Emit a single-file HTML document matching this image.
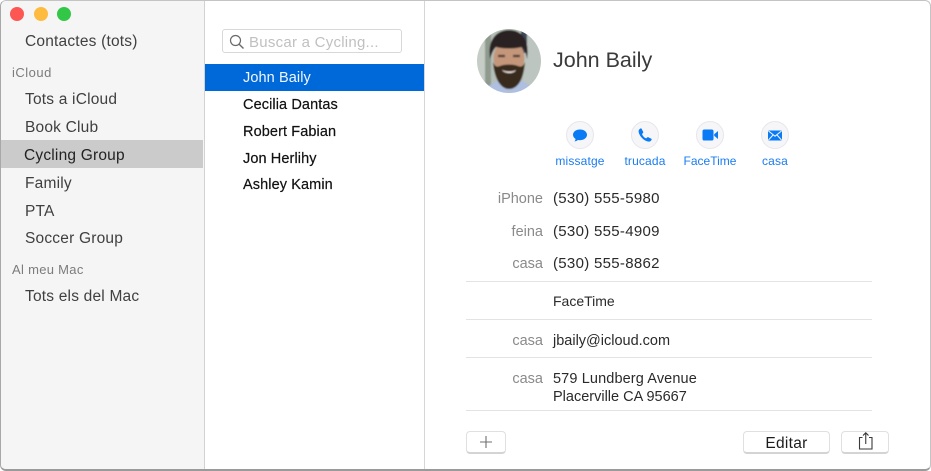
<!DOCTYPE html>
<html>
<head>
<meta charset="utf-8">
<style>
html,body{margin:0;padding:0;background:#fff}
body{width:931px;height:471px;overflow:hidden;position:relative;font-family:"Liberation Sans",sans-serif;-webkit-font-smoothing:antialiased}
.win{position:absolute;left:0;top:0;width:931px;height:471px;box-sizing:border-box;border:1px solid #c4c4c4;border-bottom:2px solid #9a9a9a;border-left-color:#a8a8a8;border-radius:6px;background:#fff;overflow:hidden}
.side{position:absolute;left:1px;top:1px;width:203px;height:468px;background:#f5f5f5;border-right:1px solid #d2d2d2;border-radius:5px 0 0 5px}
.list{position:absolute;left:205px;top:1px;width:219px;height:468px;background:#fff;border-right:1px solid #d6d6d6}
.t{position:absolute;white-space:nowrap;line-height:18px}
.s{font-size:15.5px;color:#404040;letter-spacing:.2px}
.h{font-size:13px;color:#7c7c7c;letter-spacing:.3px}
.n{font-size:14.5px;color:#111;-webkit-text-stroke:.2px #111;letter-spacing:.1px}
.lb{font-size:14.5px;color:#8a8a8a;text-align:right;width:80px;left:463px}
.v{font-size:14.5px;color:#2a2a2a;left:553px}
.p{font-size:15px;letter-spacing:.3px}
.a{font-size:12px;color:#1a7cf0;text-align:center;width:80px;letter-spacing:.15px}
.line{position:absolute;left:466px;width:406px;height:1px;background:#e3e3e3}
.dot{position:absolute;top:7px;width:14px;height:14px;border-radius:50%}
.c{position:absolute;top:121px;width:28px;height:28px;box-sizing:border-box;border-radius:50%;background:#f6f6f9;border:1px solid #e6e6ec}
.btn{position:absolute;top:431px;height:23px;box-sizing:border-box;background:#fff;border:1px solid #e0e0e0;border-bottom:2px solid #d4d4d4;border-radius:4px}
svg{position:absolute;overflow:visible}
</style>
</head>
<body>
<div class="win"></div>
<div class="side"></div>
<div class="list"></div>
<div class="dot" style="left:10px;background:#fc5753"></div>
<div class="dot" style="left:34px;background:#fdbc40"></div>
<div class="dot" style="left:57px;background:#33c748"></div>

<div class="t s" style="left:25px;top:33px">Contactes (tots)</div>
<div class="t h" style="left:12px;top:64px;letter-spacing:.5px">iCloud</div>
<div class="t s" style="left:25px;top:91px">Tots a iCloud</div>
<div class="t s" style="left:25px;top:119px">Book Club</div>
<div style="position:absolute;left:1px;top:140px;width:202px;height:28px;background:#cbcbcb"></div>
<div class="t s" style="left:24px;top:147px;color:#222">Cycling Group</div>
<div class="t s" style="left:25px;top:175px">Family</div>
<div class="t s" style="left:25px;top:203px">PTA</div>
<div class="t s" style="left:25px;top:230px">Soccer Group</div>
<div class="t h" style="left:12px;top:261px">Al meu Mac</div>
<div class="t s" style="left:25px;top:288px">Tots els del Mac</div>

<div style="position:absolute;left:222px;top:29px;width:180px;height:24px;box-sizing:border-box;border:1px solid #d8d8d8;border-radius:3px;background:#fff"></div>
<svg style="left:229px;top:34px" width="16" height="16" viewBox="0 0 16 16" fill="none" stroke="#6a6a6a" stroke-width="1.2"><circle cx="6.5" cy="6.5" r="5"/><path d="M10.2 10.2L14.5 14.5" stroke-width="1.4"/></svg>
<div class="t" style="left:249px;top:34px;font-size:15px;color:#c0c0c0;letter-spacing:.25px">Buscar a Cycling...</div>

<div style="position:absolute;left:205px;top:64px;width:219px;height:27px;background:#0069d9"></div>
<div class="t" style="left:243px;top:69px;font-size:14.5px;color:#f2f7ff;letter-spacing:.1px">John Baily</div>
<div class="t n" style="left:243px;top:96px">Cecilia Dantas</div>
<div class="t n" style="left:243px;top:123px">Robert Fabian</div>
<div class="t n" style="left:243px;top:150px">Jon Herlihy</div>
<div class="t n" style="left:243px;top:176px">Ashley Kamin</div>

<svg style="left:477px;top:29px" width="64" height="64" viewBox="0 0 64 64">
<defs>
<clipPath id="cp"><circle cx="32" cy="32" r="32"/></clipPath>
<filter id="bl" x="-10%" y="-10%" width="120%" height="120%"><feGaussianBlur stdDeviation="0.9"/></filter>
</defs>
<g clip-path="url(#cp)">
<g filter="url(#bl)">
<rect x="-2" y="-2" width="68" height="68" fill="#b5bfb8"/>
<rect x="-2" y="-2" width="10" height="68" fill="#c6ccc6"/>
<rect x="8" y="-2" width="6" height="68" fill="#8f9a8e"/>
<rect x="46" y="-2" width="20" height="68" fill="#bcc5bf"/>
<rect x="44" y="0" width="6" height="24" fill="#3e4756"/>
<path d="M6 66C9 56 18 53 24 51H42C48 53 56 56 58 66Z" fill="#aebfe0"/>
<ellipse cx="32" cy="29" rx="15.5" ry="18" fill="#c4967a"/>
<path d="M13 30C10 12 19 1 32 1C45 1 53 11 50 30C49 24 48 21 45 18C38 20 26 20 19 18C16 21 15 24 13 30Z" fill="#2a2421"/>
<path d="M16 33C17 48 23 60 32 60C42 60 47 48 48 33C46 38 44 38 41 37C37 35 27 35 23 37C20 38 18 38 16 33Z" fill="#38291f"/>
<path d="M21 27H28M36 27H43" stroke="#4a372e" stroke-width="2.2" fill="none"/>
<path d="M25 41C29 43 36 43 39 41C37 45 28 45 25 41Z" fill="#efe5de"/>
</g>
</g>
</svg>
<div class="t" style="left:553px;top:48px;font-size:21.5px;line-height:24px;color:#3a3a3a">John Baily</div>

<div class="c" style="left:566px"></div>
<div class="c" style="left:631px"></div>
<div class="c" style="left:696px"></div>
<div class="c" style="left:761px"></div>
<svg style="left:566px;top:121px" width="28" height="28" viewBox="0 0 28 28"><path d="M14 8.5C9.9 8.5 7 10.9 7 13.8C7 15.5 8 17 9.6 18C9.5 18.9 9 19.8 8.4 20.4C9.8 20.3 11 19.8 11.9 19C12.6 19.1 13.3 19.2 14 19.2C18.1 19.2 21 16.7 21 13.8C21 10.9 18.1 8.5 14 8.5Z" fill="#0a7bf5"/></svg>
<svg style="left:631px;top:121px" width="28" height="28" viewBox="0 0 28 28"><path d="M10.6 7.7L12.2 10.9C12.4 11.3 12.3 11.7 12 12L11 13C11.6 15 13.2 16.7 15.2 17.4L16.2 16.4C16.5 16.1 16.9 16 17.3 16.2L20.3 17.8C20.7 18 20.8 18.4 20.6 18.8C20 20.1 18.9 20.8 17.6 20.6C13 20 8.3 15.2 7.6 10.7C7.4 9.4 8.1 8.2 9.4 7.5C9.9 7.3 10.4 7.3 10.6 7.7Z" fill="#0a7bf5"/></svg>
<svg style="left:696px;top:121px" width="28" height="28" viewBox="0 0 28 28"><rect x="6.5" y="8.5" width="11" height="11" rx="1.8" fill="#0a7bf5"/><path d="M18.2 13.2L22 10V18L18.2 14.8Z" fill="#0a7bf5"/></svg>
<svg style="left:761px;top:121px" width="28" height="28" viewBox="0 0 28 28"><rect x="7" y="9.5" width="14" height="10" rx="1" fill="#0a7bf5"/><path d="M7.5 10L14 15.2L20.5 10M7.5 19L12 14M20.5 19L16 14" fill="none" stroke="#f6f6f9" stroke-width="1"/></svg>

<div class="t a" style="left:540px;top:152px">missatge</div>
<div class="t a" style="left:605px;top:152px">trucada</div>
<div class="t a" style="left:670px;top:152px;letter-spacing:0">FaceTime</div>
<div class="t a" style="left:735px;top:152px">casa</div>

<div class="t lb" style="top:190px">iPhone</div><div class="t v p" style="top:190px">(530) 555-5980</div>
<div class="t lb" style="top:223px">feina</div><div class="t v p" style="top:223px">(530) 555-4909</div>
<div class="t lb" style="top:255px">casa</div><div class="t v p" style="top:255px">(530) 555-8862</div>
<div class="line" style="top:281px"></div>
<div class="t v" style="top:292px;font-size:14px">FaceTime</div>
<div class="line" style="top:319px"></div>
<div class="t lb" style="top:332px">casa</div><div class="t v" style="top:332px">jbaily@icloud.com</div>
<div class="line" style="top:357px"></div>
<div class="t lb" style="top:370px">casa</div><div class="t v" style="top:370px;letter-spacing:.12px">579 Lundberg Avenue</div>
<div class="t v" style="top:388px">Placerville CA 95667</div>
<div class="line" style="top:410px"></div>

<div class="btn" style="left:466px;width:40px"></div>
<svg style="left:479px;top:435px" width="14" height="14" viewBox="0 0 14 14"><path d="M7 1V13M1 7H13" stroke="#6f6f6f" stroke-width="1.1"/></svg>
<div class="btn" style="left:743px;width:87px"></div>
<div class="t" style="left:743px;top:435px;width:87px;text-align:center;font-size:15.5px;color:#1c1c1c;letter-spacing:.3px">Editar</div>
<div class="btn" style="left:841px;width:48px"></div>
<svg style="left:857px;top:432px" width="16" height="20" viewBox="0 0 16 20" fill="none" stroke="#3a3a3a" stroke-width="1.1"><path d="M5.5 5.5H2.5V17H15V5.5H12"/><path d="M8.75 12V0.8M6 3.5L8.75 0.8L11.5 3.5"/></svg>
</body>
</html>
